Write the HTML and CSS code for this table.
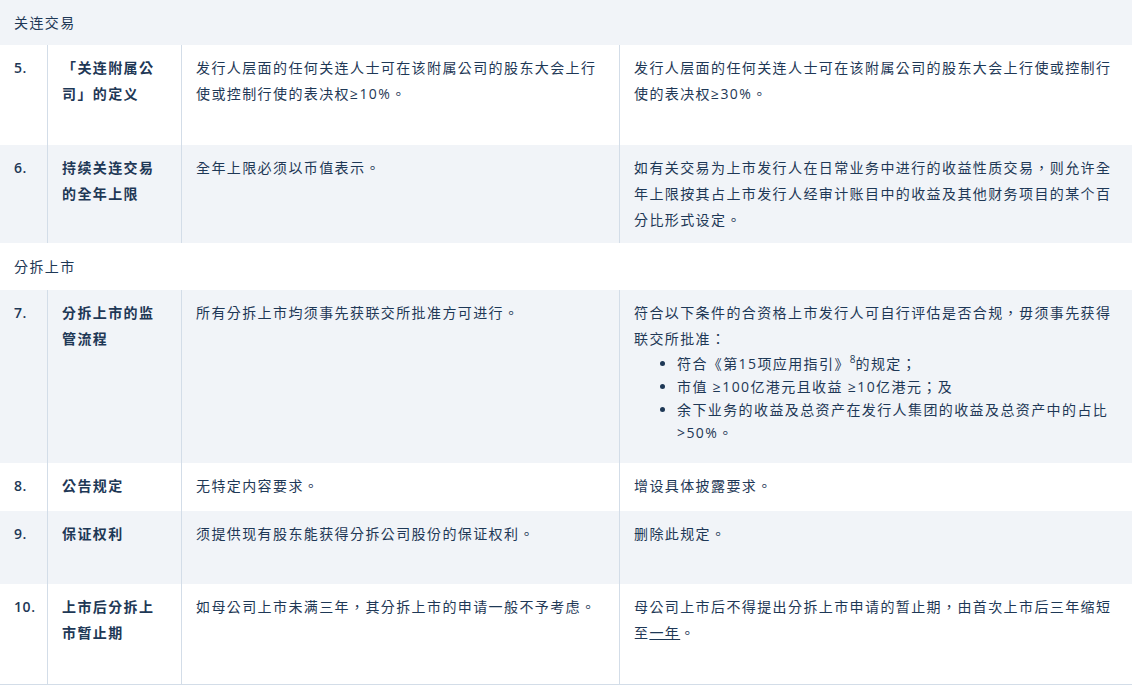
FILE: index.html
```html
<!DOCTYPE html>
<html lang="zh-Hant">
<head>
<meta charset="utf-8">
<link rel="stylesheet" href="styles.css">
</head>
<body>
<div class="table">
  <div class="section shaded">关连交易</div>

  <div class="row pad-loose">
    <div class="cell num">5.</div>
    <div class="cell title">「关连附属公司」的定义</div>
    <div class="cell">发行人层面的任何关连人士可在该附属公司的股东大会上行使或控制行使的表决权≥10%。</div>
    <div class="cell">发行人层面的任何关连人士可在该附属公司的股东大会上行使或控制行使的表决权≥30%。</div>
  </div>

  <div class="row shaded pad-tight">
    <div class="cell num">6.</div>
    <div class="cell title">持续关连交易的全年上限</div>
    <div class="cell">全年上限必须以币值表示。</div>
    <div class="cell">如有关交易为上市发行人在日常业务中进行的收益性质交易，则允许全年上限按其占上市发行人经审计账目中的收益及其他财务项目的某个百分比形式设定。</div>
  </div>

  <div class="section section-2">分拆上市</div>

  <div class="row shaded pad-list">
    <div class="cell num">7.</div>
    <div class="cell title">分拆上市的监管流程</div>
    <div class="cell">所有分拆上市均须事先获联交所批准方可进行。</div>
    <div class="cell">
      <p>符合以下条件的合资格上市发行人可自行评估是否合规，毋须事先获得联交所批准：</p>
      <ul>
        <li>符合《第15项应用指引》<sup>8</sup>的规定；</li>
        <li>市值 ≥100亿港元且收益 ≥10亿港元；及</li>
        <li>余下业务的收益及总资产在发行人集团的收益及总资产中的占比 &gt;50%。</li>
      </ul>
    </div>
  </div>

  <div class="row">
    <div class="cell num">8.</div>
    <div class="cell title">公告规定</div>
    <div class="cell">无特定内容要求。</div>
    <div class="cell">增设具体披露要求。</div>
  </div>

  <div class="row shaded pad-mid">
    <div class="cell num">9.</div>
    <div class="cell title">保证权利</div>
    <div class="cell">须提供现有股东能获得分拆公司股份的保证权利。</div>
    <div class="cell">删除此规定。</div>
  </div>

  <div class="row pad-loose last">
    <div class="cell num">10.</div>
    <div class="cell title">上市后分拆上市暂止期</div>
    <div class="cell">如母公司上市未满三年，其分拆上市的申请一般不予考虑。</div>
    <div class="cell">母公司上市后不得提出分拆上市申请的暂止期，由首次上市后三年缩短至<span class="underline">一年</span>。</div>
  </div>
</div>
</body>
</html>
```

FILE: styles.css
```css
html, body {
  margin: 0;
  padding: 0;
  background: #ffffff;
}

body {
  font-family: "Open Sans", "Noto Sans CJK TC", "Noto Sans CJK SC", sans-serif;
  font-size: 14px;
  line-height: 26px;
  color: #1e3856;
  letter-spacing: 1.4px;
}

.table {
  width: 1132px;
  display: flex;
  flex-direction: column;
}

.shaded {
  background: #f1f4f8;
}

.section {
  padding: 10px 14px 9px;
}

.section-2 {
  padding: 11px 14px 10px;
}

.row {
  display: grid;
  grid-template-columns: 48px 134px 438px 1fr;
}

.cell {
  box-sizing: border-box;
  padding: 10px 14px 12px;
  border-right: 1px solid #d3dde8;
}

.cell:last-child {
  border-right: none;
  padding-right: 14px;
}

.num, .title {
  font-weight: 600;
}

.num {
  letter-spacing: 0.6px;
}

.pad-loose .cell {
  padding-bottom: 38px;
}

.pad-tight .cell {
  padding-bottom: 10px;
}

.pad-mid .cell {
  padding-bottom: 37px;
}

.pad-list .cell {
  padding-bottom: 19px;
}

.last {
  border-bottom: 1px solid #d3dde8;
}

.cell p {
  margin: 0;
}

.cell ul {
  margin: 0;
  padding-left: 43px;
  line-height: 23px;
}

.cell sup {
  font-size: 10px;
  line-height: 0;
  vertical-align: 6px;
  letter-spacing: 0;
}

.underline {
  text-decoration: underline;
}
```
